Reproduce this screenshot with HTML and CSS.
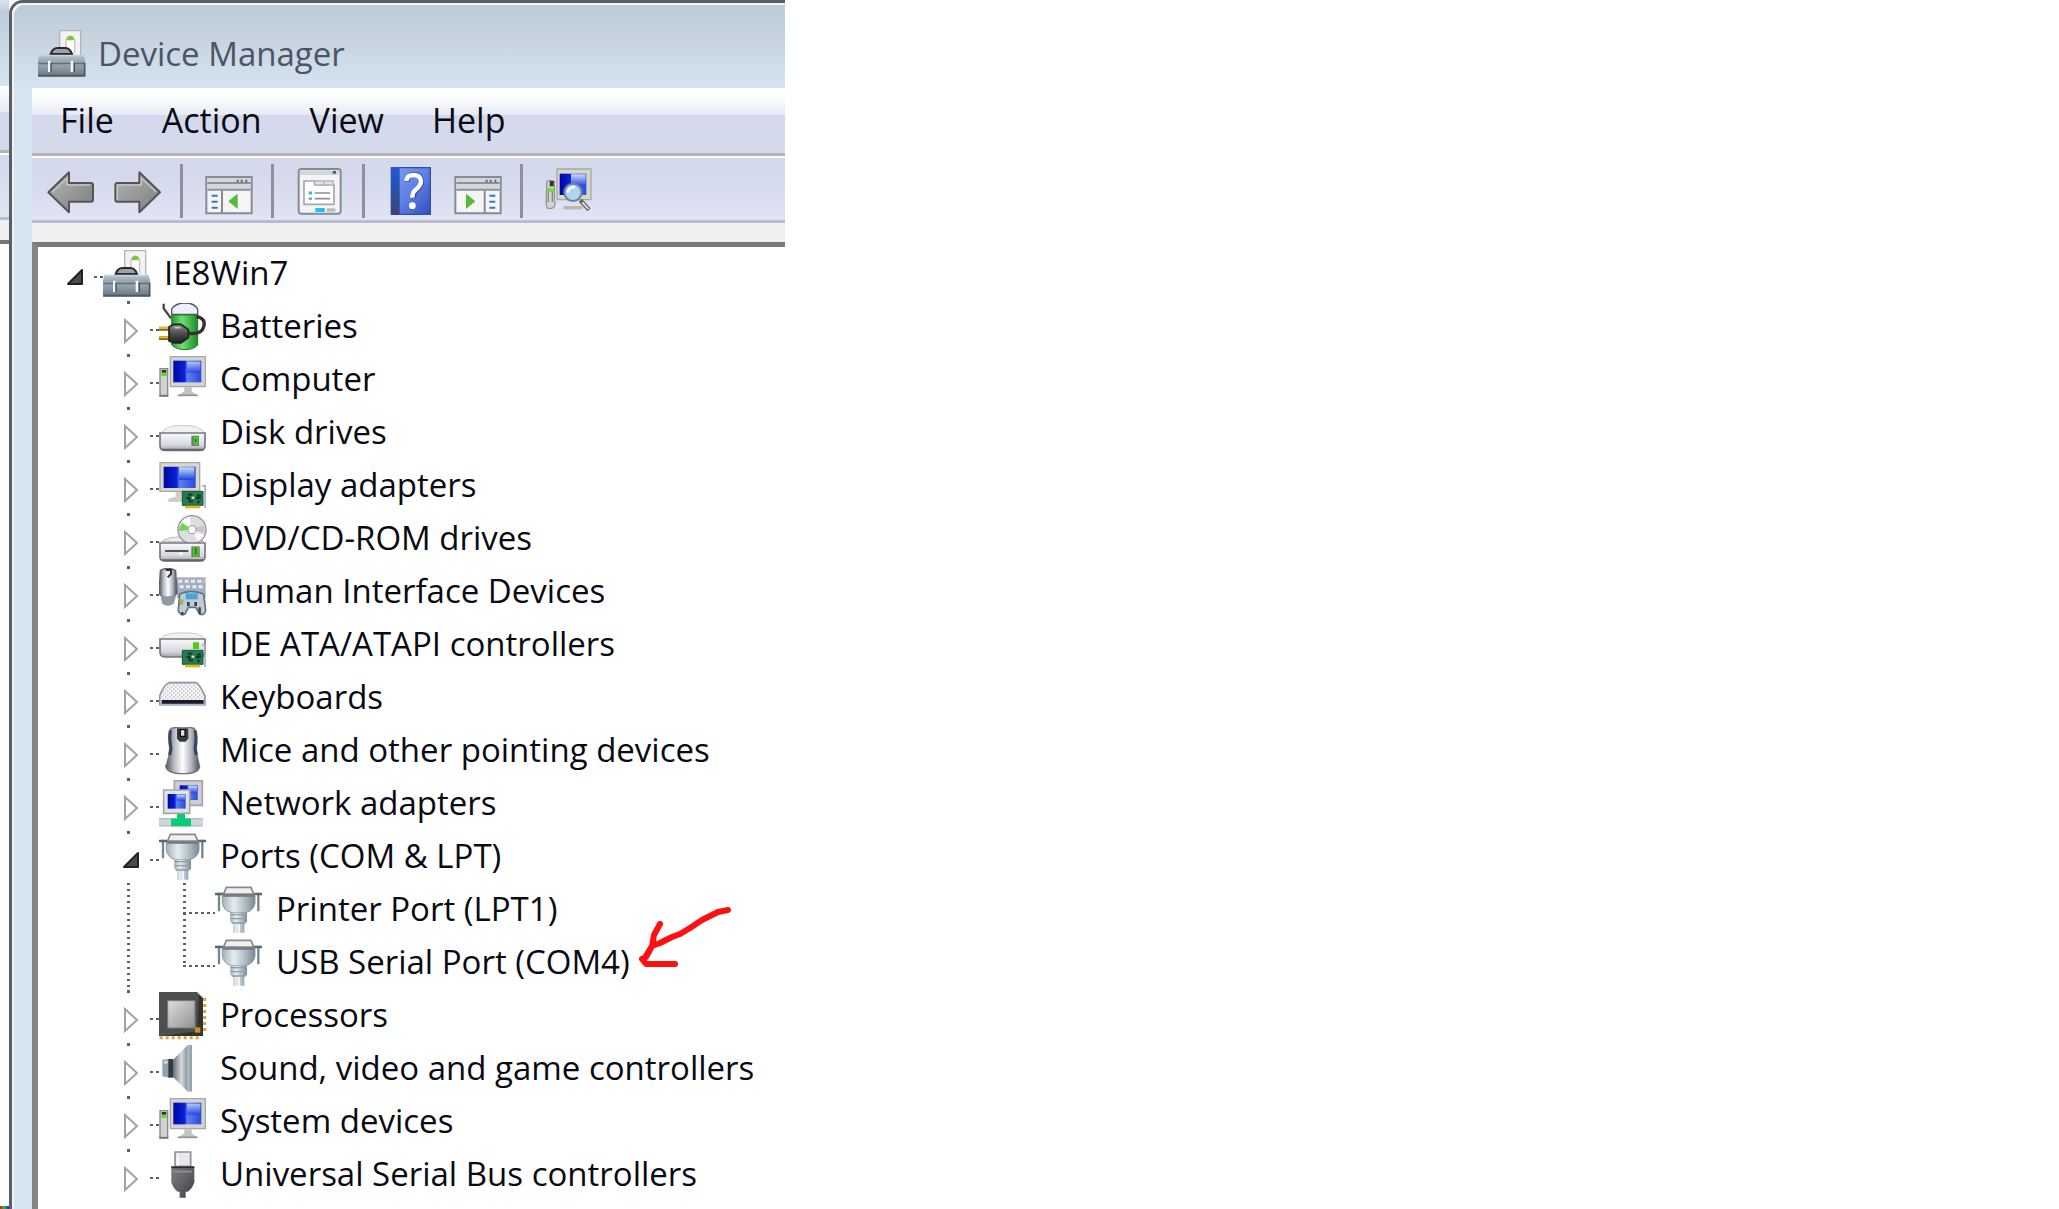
FILE: index.html
```html
<!DOCTYPE html>
<html lang="en">
<head>
<meta charset="utf-8">
<title>Device Manager</title>
<link rel="stylesheet" href="styles.css">
</head>
<body>
<svg class="sprite" aria-hidden="true">
  <defs>
    <linearGradient id="g-steel" x1="0" y1="0" x2="0" y2="1"><stop offset="0" stop-color="#b9c6ce"/><stop offset=".45" stop-color="#8797a1"/><stop offset=".5" stop-color="#93a2ab"/><stop offset="1" stop-color="#66757f"/></linearGradient>
    <linearGradient id="g-screen" x1="0" y1="0" x2="1" y2="0"><stop offset="0" stop-color="#0008a0"/><stop offset=".4" stop-color="#0a20d8"/><stop offset=".5" stop-color="#5c80f0"/><stop offset="1" stop-color="#2b48dc"/></linearGradient>
    <linearGradient id="g-shine" x1="0" y1="0" x2="0" y2="1"><stop offset="0" stop-color="#c8dcff"/><stop offset="1" stop-color="#2040e0"/></linearGradient>
    <linearGradient id="g-arrow" x1="0" y1="0" x2="1" y2="1"><stop offset="0" stop-color="#b4b4b4"/><stop offset=".5" stop-color="#999"/><stop offset="1" stop-color="#7c7c7c"/></linearGradient>
    <linearGradient id="g-help" x1="0" y1="0" x2="1" y2="1"><stop offset="0" stop-color="#7f9cf0"/><stop offset=".5" stop-color="#6080e6"/><stop offset="1" stop-color="#3050c0"/></linearGradient>
    <linearGradient id="g-spine" x1="0" y1="0" x2="0" y2="1"><stop offset="0" stop-color="#1f5ad8"/><stop offset="1" stop-color="#3a4274"/></linearGradient>
    <linearGradient id="g-case" x1="0" y1="0" x2="0" y2="1"><stop offset="0" stop-color="#fafafc"/><stop offset=".7" stop-color="#d6d6e0"/><stop offset="1" stop-color="#a0a0a8"/></linearGradient>
    <linearGradient id="g-green" x1="0" y1="0" x2="1" y2="0"><stop offset="0" stop-color="#30963a"/><stop offset=".4" stop-color="#6fe070"/><stop offset="1" stop-color="#1f8a2a"/></linearGradient>
    <linearGradient id="g-plug" x1="0" y1="0" x2="0" y2="1"><stop offset="0" stop-color="#909090"/><stop offset=".5" stop-color="#4c4c4c"/><stop offset="1" stop-color="#1d1d1d"/></linearGradient>
    <linearGradient id="g-port" x1="0" y1="0" x2="1" y2="0"><stop offset="0" stop-color="#a3b0b9"/><stop offset=".35" stop-color="#e6edf0"/><stop offset=".75" stop-color="#a5b4bc"/><stop offset="1" stop-color="#7b8991"/></linearGradient>
    <linearGradient id="g-mouse" x1="0" y1="0" x2="1" y2="0"><stop offset="0" stop-color="#4c535c"/><stop offset=".25" stop-color="#b8bcc2"/><stop offset=".5" stop-color="#fff"/><stop offset=".75" stop-color="#b4b8be"/><stop offset="1" stop-color="#474e58"/></linearGradient>
    <linearGradient id="g-chip" x1="0" y1="0" x2="1" y2="1"><stop offset="0" stop-color="#dedede"/><stop offset="1" stop-color="#909090"/></linearGradient>
    <linearGradient id="g-cone" x1="0" y1="0" x2="1" y2="0"><stop offset="0" stop-color="#626d76"/><stop offset=".6" stop-color="#d4dade"/><stop offset="1" stop-color="#8f9aa2"/></linearGradient>
    <linearGradient id="g-usb" x1="0" y1="0" x2="1" y2="1"><stop offset="0" stop-color="#7c7c80"/><stop offset=".5" stop-color="#626268"/><stop offset="1" stop-color="#38383e"/></linearGradient>
    <pattern id="p-keys" width="12" height="12" patternUnits="userSpaceOnUse"><rect width="12" height="12" fill="#f6f6f8"/><path d="M0 3h4M6 9h4" stroke="#a6a6ae" stroke-width="3"/></pattern>
  </defs>

  <symbol id="i-toolbox" viewBox="0 0 144 144">
    <path d="M65 2H128V78H65Z" fill="#f3f3f3" stroke="#b5b5b5" stroke-width="4"/>
    <path d="M84 70V28Q86 22 96 22T110 28V70" fill="#fff" stroke="#c4c4c4" stroke-width="4"/>
    <path d="M87 31V21Q97 12 107 21V31Z" fill="#7cc742"/>
    <path d="M38 72Q44 54 58 54H82Q96 54 102 72Z" fill="#9aa3a8" stroke="#2b2b2b" stroke-width="6"/>
    <path d="M5 74H136L141 90V140H0V90Z" fill="url(#g-steel)"/>
    <path d="M1 100H140" stroke="#576771" stroke-width="3"/>
    <path d="M7 77H134" stroke="#c7d3da" stroke-width="4"/>
    <path d="M1 137H140V98" stroke="#4d5a64" stroke-width="5" fill="none"/>
    <path d="M34 92V126M102 92V126" stroke="#f5f5f5" stroke-width="8"/>
    <path d="M39 98V127M109 98V127" stroke="#4e4e4e" stroke-width="4"/>
  </symbol>
  <symbol id="i-battery" viewBox="0 0 144 144">
    <path d="M14 2V16L36 46" fill="none" stroke="#444" stroke-width="7"/>
    <path d="M38 34V18Q50 0 78 0T116 18V34Z" fill="#eeeefc" stroke="#54546c" stroke-width="4"/>
    <path d="M38 36H116V126Q104 140 78 140T38 126Z" fill="url(#g-green)" stroke="#237c2c" stroke-width="3"/>
    <path d="M84 90Q126 98 134 72T112 40" fill="none" stroke="#333" stroke-width="10"/>
    <path d="M0 77H30M0 105H30" stroke="#8a6510" stroke-width="12"/><path d="M0 75H30M0 103H30" stroke="#e8bc28" stroke-width="6"/>
    <path d="M30 72L44 64H66L88 80V104L66 120H44L30 114Z" fill="url(#g-plug)" stroke="#222" stroke-width="5"/>
    <path d="M46 74H64" stroke="#c5c5c5" stroke-width="5"/>
  </symbol>
  <symbol id="i-computer" viewBox="0 0 144 144">
    <path d="M3 38H26V120H3Z" fill="#d1d1d1" stroke="#898989" stroke-width="4"/><path d="M8 42H22V50H8Z" fill="#333"/><path d="M7 51H23V60H7Z" fill="#59df27"/><path d="M1 119H28" stroke="#777" stroke-width="5"/>
    <path d="M34 2H139V92H34Z" fill="#d3d3cf" stroke="#a8a8a8" stroke-width="4"/>
    <path d="M43 14H127V79H43Z" fill="url(#g-screen)"/><path d="M84 17H124V50H84Z" fill="url(#g-shine)" opacity=".8"/>
    <path d="M76 94H98V106L116 119H56L76 106Z" fill="#c3c3c3"/><path d="M56 118H116" stroke="#929292" stroke-width="5"/>
  </symbol>
  <symbol id="i-disk" viewBox="0 0 144 144">
    <path d="M14 62Q32 52 48 50H96Q116 52 130 64L136 76H6Z" fill="#f1f1f2" stroke="#ccc" stroke-width="3"/>
    <path d="M3 72H138V112Q136 124 122 124H20Q4 124 3 112Z" fill="url(#g-case)" stroke="#77777f" stroke-width="5"/>
    <path d="M9 122H134" stroke="#65656e" stroke-width="6"/>
    <path d="M97 80H120V111H97Z" fill="#777"/><path d="M104 82H118V108H104Z" fill="#4ccc18"/><path d="M110 90V100" stroke="#2b7310" stroke-width="5"/>
  </symbol>
  <symbol id="i-card" viewBox="0 0 144 144">
    <path d="M138 68V138M128 72H140" stroke="#a7aebd" stroke-width="5"/>
    <path d="M70 88H132V130H70Z" fill="#267c50" stroke="#175238" stroke-width="3"/>
    <path d="M86 98H100M82 108H92V118H102M114 100H122V108H110M114 120H122" fill="none" stroke="#153f2c" stroke-width="7"/><path d="M98 104H106V110H98Z" fill="#dceede"/>
    <path d="M78 135H124" stroke="#e7b51b" stroke-width="8"/>
  </symbol>
  <symbol id="i-display" viewBox="0 0 144 144">
    <path d="M3 2H122V88H3Z" fill="#d8d6cd" stroke="#aaa9a1" stroke-width="4"/><path d="M14 14H110V78H14Z" fill="url(#g-screen)"/><path d="M60 16H106V54H60Z" fill="url(#g-shine)"/>
    <path d="M50 90H80V106H90V120H28V110L50 104Z" fill="#d0cec5"/>
    <use href="#i-card"/>
  </symbol>
  <symbol id="i-dvd" viewBox="0 0 144 144">
    <path d="M14 76Q32 66 56 66H118L134 80H8Z" fill="#eee" stroke="#bbb" stroke-width="3"/>
    <circle cx="99" cy="44" r="42" fill="#dedee2" stroke="#999" stroke-width="4"/><path d="M99 44L68 20A40 40 0 0 1 92 5ZM99 44L136 60A40 40 0 0 1 116 80Z" fill="#f9f9f9"/><path d="M99 44L60 48A38 38 0 0 1 70 24Z" fill="#6ad94d"/><path d="M99 44L134 30A38 38 0 0 1 136 54Z" fill="#d2bdd1"/><circle cx="99" cy="44" r="12" fill="#fff" stroke="#aaa" stroke-width="4"/>
    <path d="M3 84H138V128Q136 138 122 138H20Q4 138 3 128Z" fill="url(#g-case)" stroke="#77777f" stroke-width="5"/>
    <path d="M18 108H88" stroke="#555" stroke-width="6"/><path d="M60 116H70" stroke="#fff" stroke-width="6"/><path d="M9 136H134" stroke="#65656e" stroke-width="6"/>
    <path d="M97 94H122V126H97Z" fill="#777"/><path d="M102 96H118V124H102Z" fill="#4ccc18"/><path d="M110 98V118" stroke="#2b7310" stroke-width="5"/>
  </symbol>
  <symbol id="i-hid" viewBox="0 0 144 144">
    <path d="M54 28H140V90H54Z" fill="#a5adc2"/><path d="M58 40H136M62 56H136" stroke="#e8ebf2" stroke-width="9" stroke-dasharray="12 7"/>
    <path d="M4 8Q26-6 50 8L54 76Q44 88 26 88T0 76Z" fill="url(#g-mouse)" stroke="#59626e" stroke-width="4"/><path d="M20 6H36V18L26 28" stroke="#333" stroke-width="6" fill="none"/>
    <path d="M4 80Q28 92 52 80L44 108Q26 118 10 108Z" fill="#8e9aa4"/>
    <path d="M62 78Q96 62 134 78L140 128Q136 144 122 138L110 118H88L78 138Q64 144 58 128Z" fill="#c0cbd3" stroke="#637180" stroke-width="5"/>
    <path d="M80 76H116V94H80Z" fill="#43a8d8"/><path d="M84 108H92M106 108H114" stroke="#39424c" stroke-width="12"/><path d="M62 98H74" stroke="#70d060" stroke-width="8"/><path d="M62 106H72" stroke="#e77b2d" stroke-width="6"/><path d="M122 118V138M70 132V142" stroke="#39424c" stroke-width="7"/>
  </symbol>
  <symbol id="i-ide" viewBox="0 0 144 144">
    <path d="M14 44Q32 38 48 36H96Q116 38 130 46L136 56H6Z" fill="#f1f1f2" stroke="#ccc" stroke-width="3"/>
    <path d="M3 54H138V96Q136 108 122 108H20Q4 108 3 96Z" fill="url(#g-case)" stroke="#77777f" stroke-width="5"/><path d="M102 64H120V84H102Z" fill="#4ccc18"/>
    <use href="#i-card"/>
  </symbol>
  <symbol id="i-keyboard" viewBox="0 0 144 144">
    <path d="M30 26H112Q122 30 138 66V92H2V66Q14 32 30 26Z" fill="url(#p-keys)" stroke="#8f93a9" stroke-width="5"/>
    <path d="M8 78H134V90H8Z" fill="#161d27"/><path d="M2 92H138" stroke="#a9b6cb" stroke-width="5"/>
  </symbol>
  <symbol id="i-mouse" viewBox="0 0 144 144">
    <path d="M36 4Q72-4 106 4Q116 20 112 64Q114 94 122 118Q120 140 72 140T20 118Q32 92 32 64Q26 20 36 4Z" fill="url(#g-mouse)" stroke="#747474" stroke-width="4"/>
    <path d="M34 10Q30 30 36 66L32 84M108 10Q114 30 108 66L112 84" fill="none" stroke="#36465c" stroke-width="9"/>
    <path d="M54 4H88V34L80 44H62L54 34Z" fill="#363a40"/><path d="M64 8H78V28H64Z" fill="#e5e5e5" stroke="#111" stroke-width="4"/>
  </symbol>
  <symbol id="i-network" viewBox="0 0 144 144">
    <path d="M46 2H130V76H46Z" fill="#cdcdd3" stroke="#a4a4aa" stroke-width="5"/><path d="M62 16H116V60H62Z" fill="url(#g-screen)"/><path d="M88 18H114V40H88Z" fill="url(#g-shine)"/>
    <path d="M14 30H92V100H14Z" fill="#e3e3e7" stroke="#a4a4aa" stroke-width="5"/><path d="M26 42H80V86H26Z" fill="url(#g-screen)"/><path d="M54 44H78V62H54Z" fill="url(#g-shine)"/>
    <path d="M0 116H132V138H0Z" fill="#cdd6da"/><path d="M0 138H132M0 116H132" stroke="#a7b2b8" stroke-width="3"/><path d="M54 102H78V116H96V139H36V116H54Z" fill="#08cd76"/>
  </symbol>
  <symbol id="i-port" viewBox="0 0 144 144">
    <path d="M12 20V76M130 20V76" stroke="#78868e" stroke-width="7"/><path d="M0 24H141" stroke="#5e686d" stroke-width="8"/>
    <path d="M34 4H108L116 24H26Z" fill="#f0f0f0" stroke="#888" stroke-width="5"/>
    <path d="M22 28H120V52Q116 74 92 80H50Q26 74 22 52Z" fill="url(#g-port)" stroke="#8b979f" stroke-width="3"/>
    <path d="M24 29H118" stroke="#737d82" stroke-width="7"/>
    <path d="M46 80H96V108L88 112V140H54V112L46 108Z" fill="url(#g-port)"/><path d="M46 86H96M46 98H96M50 111H92" stroke="#8d9ca5" stroke-width="4"/><path d="M72 114V140" stroke="#f0f4f6" stroke-width="6"/>
  </symbol>
  <symbol id="i-cpu" viewBox="0 0 144 144">
    <path d="M2 137H122" stroke="#dca047" stroke-width="9" stroke-dasharray="9 9"/><path d="M137 18V124" stroke="#dca047" stroke-width="9" stroke-dasharray="9 9"/>
    <path d="M0 0H114L132 18V132H0Z" fill="#4c4f4c"/><path d="M120 8L132 20V132H8L114 118Z" fill="#30332f"/>
    <path d="M26 26H108V108H26Z" fill="url(#g-chip)" stroke="#777" stroke-width="3"/><path d="M108 106H124V122H108Z" fill="#cf8e25"/>
  </symbol>
  <symbol id="i-sound" viewBox="0 0 144 144">
    <path d="M10 44L30 42V98L10 94Z" fill="#90a1ae"/><path d="M28 42H42V98H28Z" fill="#303b44"/><path d="M42 44L84 2V138L42 96Z" fill="url(#g-cone)"/><path d="M84 0H98V140H84Z" fill="#a9b7c0"/><path d="M96 1V139" stroke="#84939e" stroke-width="4"/><path d="M14 52H26" stroke="#cad9e2" stroke-width="8"/>
  </symbol>
  <symbol id="i-usb" viewBox="0 0 144 144">
    <path d="M48 3H95V46H48Z" fill="#e6e8ec" stroke="#8d909c" stroke-width="5"/><path d="M56 12V44" stroke="#fff" stroke-width="5"/>
    <path d="M37 46H106V94Q100 114 86 122H80V140H62V122H56Q42 112 37 94Z" fill="url(#g-usb)"/><path d="M37 49H106" stroke="#29292d" stroke-width="5"/><path d="M44 62H98" stroke="#929297" stroke-width="5"/>
  </symbol>

  <symbol id="i-open" viewBox="0 0 28 53"><path d="M19 23V37H5Z" fill="#4a4a4a" stroke="#222" stroke-width="2" stroke-linejoin="round"/></symbol>
  <symbol id="i-closed" viewBox="0 0 28 53"><path d="M6 20V42L18 31Z" fill="#fff" stroke="#a2a2a2" stroke-width="2"/></symbol>

  <symbol id="i-back" viewBox="0 0 144 144">
    <path d="M4 76L66 16V48H132Q138 48 138 54V98Q138 104 132 104H66V136Z" fill="url(#g-arrow)" stroke="#555" stroke-width="6" stroke-linejoin="round"/><path d="M16 76L60 34V54H130" fill="none" stroke="#c6c6c6" stroke-width="4"/>
  </symbol>
  <symbol id="i-forward" viewBox="0 0 144 144">
    <path d="M138 76L76 16V48H10Q4 48 4 54V98Q4 104 10 104H76V136Z" fill="url(#g-arrow)" stroke="#555" stroke-width="6" stroke-linejoin="round"/><path d="M10 98V54H82V34L126 74" fill="none" stroke="#c6c6c6" stroke-width="4"/>
  </symbol>
  <symbol id="i-pane" viewBox="0 0 144 144">
    <path d="M4 30H140V139H4Z" fill="#f5f5f5" stroke="#868b94" stroke-width="6"/><path d="M7 33H137V68H7Z" fill="#d4d6da"/><path d="M7 48H137M7 68H137" stroke="#8b929e" stroke-width="6"/><path d="M98 38V46M110 38V46M124 38V46" stroke="#586c8d" stroke-width="6"/>
  </symbol>
  <symbol id="i-tree" viewBox="0 0 144 144">
    <use href="#i-pane"/><path d="M51 70V138" stroke="#858b96" stroke-width="6"/><path d="M20 86H38M20 104H38M20 122H38" stroke="#3978b5" stroke-width="6"/><path d="M98 80V126L70 103Z" fill="#55b93c"/>
  </symbol>
  <symbol id="i-action" viewBox="0 0 144 144">
    <use href="#i-pane"/><path d="M92 70V138" stroke="#858b96" stroke-width="6"/><path d="M106 86H124M106 104H124M106 122H124" stroke="#3978b5" stroke-width="6"/><path d="M36 80V126L64 103Z" fill="#55b93c"/>
  </symbol>
  <symbol id="i-props" viewBox="0 0 144 144">
    <rect x="8" y="6" width="126" height="134" rx="8" fill="#f4f4f4" stroke="#868b90" stroke-width="6"/><path d="M12 10H130V24H12Z" fill="#d5d8db"/><path d="M110 12H120V20H110Z" fill="#4b5872"/>
    <path d="M24 42H56V54H114V112H24Z" fill="#fff" stroke="#a4a7b2" stroke-width="5"/><path d="M58 42H112V54H58M84 42V54" fill="#e2e3e8" stroke="#b1b4bf" stroke-width="4"/>
    <path d="M38 78H48" stroke="#12c6ee" stroke-width="9"/><path d="M38 95H48" stroke="#888" stroke-width="6"/><path d="M56 78H102M56 95H102" stroke="#909090" stroke-width="5"/>
    <path d="M58 129H86" stroke="#18c4f2" stroke-width="12"/><path d="M92 129H118" stroke="#bbb" stroke-width="10"/>
  </symbol>
  <symbol id="i-help" viewBox="0 0 144 144">
    <path d="M13 2H130V142H13Z" fill="url(#g-help)" stroke="#334f9e" stroke-width="4"/><path d="M12 0H38V144H12Z" fill="url(#g-spine)"/>
    <path d="M60 44Q62 22 82 22T104 44Q104 58 88 70Q80 78 80 94" fill="none" stroke="#3a4d96" stroke-width="14"/><path d="M58 42Q60 24 80 24T102 42Q102 56 86 68Q76 76 76 92" fill="none" stroke="#fff" stroke-width="13"/><circle cx="76" cy="116" r="10" fill="#fff"/>
  </symbol>
  <symbol id="i-scan" viewBox="0 0 144 144">
    <path d="M5 44Q14 36 28 44V100Q34 120 20 124H10Q2 122 4 100Z" fill="#d4d4d0" stroke="#969690" stroke-width="4"/><path d="M10 62V106M22 66V106" stroke="#8a8a88" stroke-width="4"/><path d="M14 42H26V58H14Z" fill="#333"/><path d="M10 64H26V74H10Z" fill="#58ee20"/>
    <path d="M36 6H138V98H36Z" fill="#d7d5cc" stroke="#a9a8a0" stroke-width="4"/><path d="M44 20H124V84H44Z" fill="url(#g-screen)"/><path d="M78 22H122V58H78Z" fill="url(#g-shine)"/><path d="M56 122H112" stroke="#bab8ad" stroke-width="10"/>
    <path d="M106 100L132 128" stroke="#666" stroke-width="13"/><path d="M112 106L130 126" stroke="#e8e8e8" stroke-width="5"/><circle cx="84" cy="76" r="26" fill="#aed4f2" stroke="#6f8291" stroke-width="6"/><path d="M68 76Q72 60 90 60" stroke="#f3faff" stroke-width="8" fill="none"/>
  </symbol>
</svg>

<div class="behind" aria-hidden="true">
  <div class="behind-title"></div><div class="behind-menu"></div><div class="behind-tools"></div><div class="behind-gap"></div><div class="behind-body"></div><div class="behind-pixels"></div>
</div>

<main class="window">
  <header class="titlebar">
    <svg class="icon"><use href="#i-toolbox"/></svg>
    <h1 class="title">Device Manager</h1>
  </header>
  <div class="client">
    <nav class="menubar" aria-label="Menu">
      <button type="button">File</button>
      <button type="button">Action</button>
      <button type="button">View</button>
      <button type="button">Help</button>
    </nav>
    <div class="toolbar" role="toolbar" aria-label="Tools">
      <div class="group">
        <button type="button" aria-label="Back"><svg class="icon"><use href="#i-back"/></svg></button>
        <button type="button" aria-label="Forward"><svg class="icon"><use href="#i-forward"/></svg></button>
      </div>
      <div class="group"><button type="button" aria-label="Show console tree"><svg class="icon"><use href="#i-tree"/></svg></button></div>
      <div class="group"><button type="button" aria-label="Properties"><svg class="icon"><use href="#i-props"/></svg></button></div>
      <div class="group">
        <button type="button" aria-label="Help topics"><svg class="icon"><use href="#i-help"/></svg></button>
        <button type="button" aria-label="Show action pane"><svg class="icon"><use href="#i-action"/></svg></button>
      </div>
      <div class="group"><button type="button" aria-label="Scan for hardware changes"><svg class="icon"><use href="#i-scan"/></svg></button></div>
    </div>
    <div class="tree">
      <div class="row root"><button class="expander" type="button" aria-label="Collapse"><svg><use href="#i-open"/></svg></button><i class="link"></i><svg class="icon"><use href="#i-toolbox"/></svg><span class="label">IE8Win7</span></div>
      <ul class="branch">
        <li><div class="row"><button class="expander" type="button" aria-label="Expand"><svg><use href="#i-closed"/></svg></button><i class="link"></i><svg class="icon"><use href="#i-battery"/></svg><span class="label">Batteries</span></div></li>
        <li><div class="row"><button class="expander" type="button" aria-label="Expand"><svg><use href="#i-closed"/></svg></button><i class="link"></i><svg class="icon"><use href="#i-computer"/></svg><span class="label">Computer</span></div></li>
        <li><div class="row"><button class="expander" type="button" aria-label="Expand"><svg><use href="#i-closed"/></svg></button><i class="link"></i><svg class="icon"><use href="#i-disk"/></svg><span class="label">Disk drives</span></div></li>
        <li><div class="row"><button class="expander" type="button" aria-label="Expand"><svg><use href="#i-closed"/></svg></button><i class="link"></i><svg class="icon"><use href="#i-display"/></svg><span class="label">Display adapters</span></div></li>
        <li><div class="row"><button class="expander" type="button" aria-label="Expand"><svg><use href="#i-closed"/></svg></button><i class="link"></i><svg class="icon"><use href="#i-dvd"/></svg><span class="label">DVD/CD-ROM drives</span></div></li>
        <li><div class="row"><button class="expander" type="button" aria-label="Expand"><svg><use href="#i-closed"/></svg></button><i class="link"></i><svg class="icon"><use href="#i-hid"/></svg><span class="label">Human Interface Devices</span></div></li>
        <li><div class="row"><button class="expander" type="button" aria-label="Expand"><svg><use href="#i-closed"/></svg></button><i class="link"></i><svg class="icon"><use href="#i-ide"/></svg><span class="label">IDE ATA/ATAPI controllers</span></div></li>
        <li><div class="row"><button class="expander" type="button" aria-label="Expand"><svg><use href="#i-closed"/></svg></button><i class="link"></i><svg class="icon"><use href="#i-keyboard"/></svg><span class="label">Keyboards</span></div></li>
        <li><div class="row"><button class="expander" type="button" aria-label="Expand"><svg><use href="#i-closed"/></svg></button><i class="link"></i><svg class="icon"><use href="#i-mouse"/></svg><span class="label">Mice and other pointing devices</span></div></li>
        <li><div class="row"><button class="expander" type="button" aria-label="Expand"><svg><use href="#i-closed"/></svg></button><i class="link"></i><svg class="icon"><use href="#i-network"/></svg><span class="label">Network adapters</span></div></li>
        <li><div class="row"><button class="expander" type="button" aria-label="Collapse"><svg><use href="#i-open"/></svg></button><i class="link"></i><svg class="icon"><use href="#i-port"/></svg><span class="label">Ports (COM &amp; LPT)</span></div>
          <ul class="leaves">
            <li class="row"><i class="link"></i><svg class="icon"><use href="#i-port"/></svg><span class="label">Printer Port (LPT1)</span></li>
            <li class="row"><i class="link"></i><svg class="icon"><use href="#i-port"/></svg><span class="label">USB Serial Port (COM4)<svg class="pointer" viewBox="0 0 96 66" aria-hidden="true"><path d="M90 6L80 8L64 16L52 24L42 30L34 33L22 39L14 42L8 53L4 55L8 60H37M22 20L16 31L14 42L6 55" fill="none" stroke="#ff1010" stroke-width="6" stroke-linecap="round" stroke-linejoin="round"/></svg></span></li>
          </ul>
        </li>
        <li><div class="row"><button class="expander" type="button" aria-label="Expand"><svg><use href="#i-closed"/></svg></button><i class="link"></i><svg class="icon"><use href="#i-cpu"/></svg><span class="label">Processors</span></div></li>
        <li><div class="row"><button class="expander" type="button" aria-label="Expand"><svg><use href="#i-closed"/></svg></button><i class="link"></i><svg class="icon"><use href="#i-sound"/></svg><span class="label">Sound, video and game controllers</span></div></li>
        <li><div class="row"><button class="expander" type="button" aria-label="Expand"><svg><use href="#i-closed"/></svg></button><i class="link"></i><svg class="icon"><use href="#i-computer"/></svg><span class="label">System devices</span></div></li>
        <li><div class="row"><button class="expander" type="button" aria-label="Expand"><svg><use href="#i-closed"/></svg></button><i class="link"></i><svg class="icon"><use href="#i-usb"/></svg><span class="label">Universal Serial Bus controllers</span></div></li>
      </ul>
    </div>
  </div>
</main>
</body>
</html>
```
FILE: styles.css
```css
:root {
  --frame: #d6e4f1;
  --bar: #d4d9ec;
  --dot: #606060;
}

* { box-sizing: border-box; }

body {
  display: flex;
  min-height: 100vh;
  margin: 0;
  background: #fff;
  color: #0a0a14;
  font: 33px/52px "Open Sans", "Noto Sans", sans-serif;
}

button {
  padding: 0;
  border: 0;
  background: none;
  color: inherit;
  font: inherit;
}

ul { margin: 0; padding: 0; list-style: none; }
svg { display: block; }

.sprite { position: absolute; width: 0; height: 0; }
.icon { flex: none; width: 48px; height: 48px; }

/* Sliver of the window that lies underneath */
.behind { display: flex; flex: none; flex-direction: column; width: 9px; }
.behind-title { height: 86px; background: linear-gradient(#dce4ee, #bdcddb 12px, var(--frame)); }
.behind-menu { height: 67px; border-bottom: 3px solid #b4b4b4; background: linear-gradient(#fff, #e6eaf5 26px, var(--bar) 26px); }
.behind-tools { height: 67px; border-top: 2px solid #fff; border-bottom: 3px solid #b8bcd0; background: linear-gradient(var(--bar), #e0e4f4); }
.behind-gap { height: 24px; border-bottom: 4px solid #777; background: #f0f0f0; }
.behind-body { flex: 1; }
.behind-pixels { height: 3px; background: linear-gradient(90deg, #e02020, #20c040, #2020e0); }

/* Window frame */
.window {
  display: flex;
  flex-direction: column;
  width: 37.7%;
  border-top: 3px solid #5c5f61;
  border-left: 3px solid #5c5f61;
  border-top-left-radius: 14px;
  background: var(--frame);
  box-shadow: inset 2px 2px #edf2f8;
}

.titlebar {
  display: flex;
  align-items: center;
  gap: 12px;
  height: 85px;
  padding: 16px 0 0 26px;
  border-top-left-radius: 11px;
  background: linear-gradient(#bccad8, #c6d3df 40%, var(--frame));
  box-shadow: inset 2px 2px #edf2f8;
}

.title { margin: 0; color: #4c5566; font-size: 33px; font-weight: 400; }

.client { display: flex; flex: 1; flex-direction: column; margin-left: 20px; background: #f0f0f0; }

.menubar {
  display: flex;
  gap: 48px;
  height: 68px;
  padding: 6px 0 7px 28px;
  border-bottom: 3px solid #b4b4b4;
  background: linear-gradient(#fff, #fbfcfe 10px, #e6eaf5 27px, var(--bar) 27px);
  font-size: 34px;
}

.toolbar {
  display: flex;
  align-items: center;
  height: 67px;
  padding: 3px 0 0 15px;
  border-top: 2px solid #fff;
  border-bottom: 3px solid #b8bcd0;
  background: linear-gradient(var(--bar) 30%, #e0e4f4);
}

.group { display: flex; gap: 19px; }
.group + .group { margin-left: 18px; padding: 3px 0 3px 22px; border-left: 3px solid #8d919e; }

/* Device tree */
.tree {
  flex: 1;
  margin-top: 19px;
  border-top: 5px solid #7a7a7a;
  border-left: 6px solid #858585;
  background: #fff;
}

.row { display: flex; height: 53px; padding-left: 81px; }
.root { padding-left: 25px; }
.row .icon { margin-top: 3px; }
.row .label { position: relative; margin-left: 13px; white-space: nowrap; }

.expander { flex: none; width: 28px; }
.expander svg { width: 28px; height: 53px; }

.link {
  flex: none;
  width: 12px;
  height: 3px;
  margin-top: 29px;
  background: linear-gradient(90deg, transparent 3px, var(--dot) 3px, var(--dot) 6px, transparent 6px) 0 0 / 6px 2px repeat-x;
}

.branch > li { background: linear-gradient(var(--dot), var(--dot)) 89px 1px / 3px 3px no-repeat; }

/* The branch line runs on past the leaves, which have a line of their own */
.leaves {
  background:
    linear-gradient(var(--dot) 2px, transparent 2px) 89px 0 / 3px 6px repeat-y,
    linear-gradient(#fff, #fff) 145px 84px / 3px 30px no-repeat,
    linear-gradient(var(--dot) 2px, transparent 2px) 145px 0 / 3px 6px repeat-y;
}
.leaves .row { padding-left: 142px; }
.leaves .link { width: 35px; }

.pointer { position: absolute; top: -32px; left: 100%; width: 96px; height: 66px; margin-left: 8px; }
```
